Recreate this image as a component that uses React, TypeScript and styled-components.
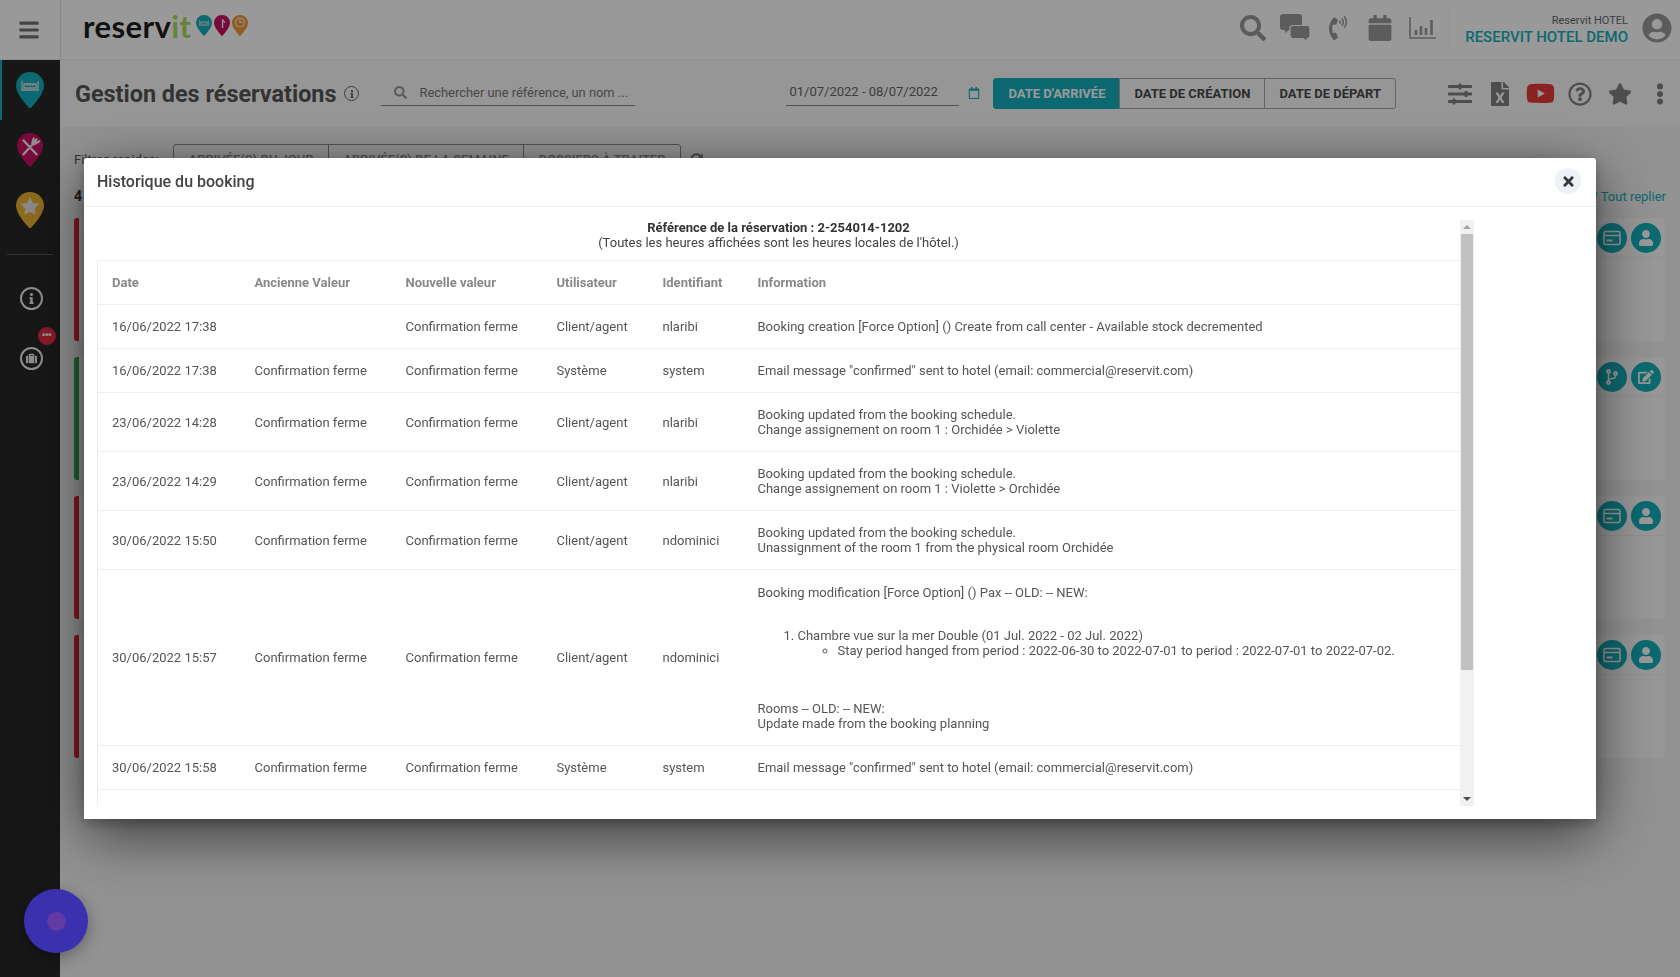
import { ReactNode } from 'react';
import styled, { createGlobalStyle } from 'styled-components';
import {
  FaBars, FaSearch, FaPhoneVolume, FaCalendar, FaUserCircle, FaSlidersH, FaFileExcel, FaYoutube,
  FaRegQuestionCircle, FaStar, FaEllipsisV, FaTimes, FaInfo, FaSuitcase, FaRegCalendar, FaUser,
  FaCodeBranch, FaEdit, FaSyncAlt,
} from 'react-icons/fa';

const TEAL = '#14b0bc';

const Global = createGlobalStyle`
  html, body { margin: 0; padding: 0; height: 100%; }
  body { font-family: Roboto, 'Liberation Sans', sans-serif; background: #f4f4f4; overflow: hidden; }
  * { box-sizing: border-box; }
`;

const Page = styled.div`
  width: 1680px;
  height: 977px;
  display: flex;
  flex-direction: column;
  overflow: hidden;
`;

const TopBar = styled.header`
  height: 60px;
  flex-shrink: 0;
  display: flex;
  align-items: center;
  background: #fff;
  border-bottom: 1px solid #f0f0f0;
`;

const BurgerCell = styled.div`
  width: 61px;
  height: 59px;
  display: flex;
  align-items: center;
  justify-content: center;
  border-right: 1px solid #e4e4e4;
  color: #707070;
  font-size: 22px;
  padding-right: 2px;
`;

const Logo = styled.div`
  margin-left: 22px;
  display: flex;
  align-items: center;
  gap: 2px;
  height: 52px;
  margin-top: -8px;
`;

const LogoWord = styled.span`
  font-family: Lato, 'Open Sans', sans-serif;
  font-size: 31px;
  font-weight: 700;
  color: #1d1d1d;
  letter-spacing: 0.4px;
  margin-right: 3px;
  b { color: #a8dc5c; font-weight: 700; }
`;

const TopIcons = styled.div`
  margin-left: auto;
  display: flex;
  align-items: center;
`;

const TopIcon = styled.span<{ $size: number }>`
  width: 42.5px;
  display: flex;
  justify-content: center;
  padding-bottom: 4px;
  color: #999;
  font-size: ${p => p.$size}px;
`;

const HotelBlock = styled.div`
  margin-left: 5px;
  border-left: 1px solid #f0f0f0;
  height: 42px;
  display: flex;
  flex-direction: column;
  align-items: flex-end;
  justify-content: center;
  width: 179px;
`;

const HotelSmall = styled.span`
  font-size: 11px;
  line-height: 14px;
  color: #666;
`;

const HotelName = styled.span`
  font-size: 15px;
  line-height: 18px;
  font-weight: 500;
  color: ${TEAL};
  white-space: nowrap;
`;

const Avatar = styled.span`
  margin: 0 8px 0 14px;
  color: #999;
  font-size: 30px;
  display: flex;
  padding-bottom: 4px;
`;

const Body = styled.div`
  flex: 1;
  display: flex;
  min-height: 0;
`;

const Sidebar = styled.nav`
  width: 60px;
  flex-shrink: 0;
  background: #272727;
  display: flex;
  flex-direction: column;
  align-items: center;
`;

const ModuleLink = styled.div<{ $active?: boolean }>`
  width: 100%;
  height: 60px;
  display: flex;
  align-items: center;
  justify-content: center;
  border-left: 2px solid ${p => (p.$active ? TEAL : 'transparent')};
  padding-right: 2px;
`;

const SideRule = styled.div`
  width: 46px;
  height: 1px;
  background: #555;
  margin-top: 14px;
`;

const SideTool = styled.div`
  position: relative;
  width: 23px;
  height: 23px;
  border-radius: 50%;
  border: 2px solid #eee;
  display: flex;
  align-items: center;
  justify-content: center;
  color: #eee;
  font-size: 11px;
  margin: 32px 0 0 2px;
  & + & { margin-top: 37px; }
`;

const RedBadge = styled.span`
  position: absolute;
  top: -22px;
  left: 16px;
  width: 18px;
  height: 18px;
  border-radius: 50%;
  background: #e62e43;
  display: flex;
  align-items: center;
  justify-content: center;
  color: #fff;
  font-size: 10px;
  font-weight: 900;
  line-height: 8px;
  letter-spacing: -0.5px;
`;

const Main = styled.main`
  flex: 1;
  min-width: 0;
  display: flex;
  flex-direction: column;
`;

const ToolBar = styled.div`
  height: 67px;
  flex-shrink: 0;
  background: #fbfbfb;
  display: flex;
  align-items: center;
  padding-left: 15px;
`;

const PageTitle = styled.h1`
  margin: 0;
  font-size: 23.4px;
  font-weight: 700;
  color: #555;
  white-space: nowrap;
`;

const TitleInfo = styled.span`
  width: 15px;
  height: 15px;
  margin-left: 8px;
  border-radius: 50%;
  border: 1.5px solid #666;
  color: #666;
  display: flex;
  align-items: center;
  justify-content: center;
  font-size: 8px;
`;

const SearchBox = styled.div`
  margin-left: 22px;
  width: 254px;
  height: 28px;
  margin-top: -4px;
  border-bottom: 1px solid #8a8a8a;
  display: flex;
  align-items: center;
  gap: 12px;
  padding: 3px 0 0 13px;
  font-size: 12.9px;
  color: #777;
  svg { color: #999; font-size: 13px; flex-shrink: 0; }
`;

const DateBox = styled.div`
  margin-left: 151px;
  width: 173px;
  height: 28px;
  margin-top: -4px;
  border-bottom: 1px solid #8a8a8a;
  padding: 6px 0 0 3px;
  font-size: 13px;
  color: #666;
`;

const DateIcon = styled.span`
  margin: -2px 13px 0 9px;
  font-size: 12px;
  color: ${TEAL};
  display: flex;
`;

const Segments = styled.div`
  display: flex;
  height: 31px;
  margin-top: -1px;
`;

const Segment = styled.div<{ $active?: boolean }>`
  display: flex;
  align-items: center;
  justify-content: center;
  font-size: 13px;
  font-weight: 700;
  text-transform: uppercase;
  white-space: nowrap;
  padding: 0 14px;
  color: ${p => (p.$active ? '#fff' : '#4a4a4a')};
  background: ${p => (p.$active ? TEAL : 'transparent')};
  border: 1px solid ${p => (p.$active ? TEAL : '#a8a8a8')};
  margin-left: -1px;
  &:first-child { border-radius: 3px 0 0 3px; margin-left: 0; }
  &:last-child { border-radius: 0 3px 3px 0; }
`;

const ToolIcons = styled.div`
  margin-left: auto;
  display: flex;
  align-items: center;
`;

const ToolIcon = styled.span<{ $size: number; $color?: string }>`
  width: 40px;
  display: flex;
  justify-content: center;
  font-size: ${p => p.$size}px;
  color: ${p => p.$color ?? '#808080'};
`;

const Content = styled.section`
  flex: 1;
  min-height: 0;
  background: #f4f4f4;
  padding: 17px 15px 0 14px;
  display: flex;
  flex-direction: column;
`;

const FilterRow = styled.div`
  display: flex;
  align-items: center;
  height: 30px;
`;

const FilterLabel = styled.span`
  width: 99px;
  font-size: 13px;
  color: #555;
`;

const FilterGroup = styled.div`
  display: flex;
  height: 30px;
  border: 1px solid #888;
  border-radius: 3px;
`;

const FilterBtn = styled.span<{ $w: number }>`
  width: ${p => p.$w}px;
  display: flex;
  align-items: center;
  justify-content: center;
  font-size: 13px;
  font-weight: 500;
  color: #888;
  white-space: nowrap;
  & + & { border-left: 1px solid #888; }
`;

const RefreshIcon = styled.span`
  margin-left: 9px;
  font-size: 13px;
  color: #777;
  display: flex;
`;

const CountRow = styled.div`
  display: flex;
  justify-content: space-between;
  align-items: center;
  height: 18px;
  margin-top: 13px;
  font-size: 13px;
`;

const CountText = styled.strong`
  color: #333;
  font-size: 14px;
`;

const CollapseLink = styled.span`
  color: ${TEAL};
  margin-right: -1px;
`;

const CardList = styled.div`
  margin-top: 13px;
  display: flex;
  flex-direction: column;
  gap: 16px;
`;

const Card = styled.article<{ $color: string }>`
  height: 123px;
  background: #fcfcfc;
  border-left: 5px solid ${p => p.$color};
  border-radius: 3px;
`;

const CardHead = styled.div`
  height: 40px;
  border-bottom: 1px solid #f2f2f2;
  display: flex;
  justify-content: flex-end;
  align-items: center;
  gap: 4px;
  padding-right: 4px;
`;

const RoundBtn = styled.span`
  width: 30px;
  height: 30px;
  border-radius: 50%;
  background: ${TEAL};
  color: #fff;
  display: flex;
  align-items: center;
  justify-content: center;
  font-size: 16px;
`;

const Overlay = styled.div`
  position: fixed;
  inset: 0;
  background: rgba(0, 0, 0, 0.4);
  padding: 158px 84px 0;
`;

const Modal = styled.div`
  width: 1512px;
  height: 661px;
  background: #fff;
  border-radius: 3px 3px 0 0;
  box-shadow: 0 16px 60px rgba(0, 0, 0, 0.6), 0 4px 12px rgba(0, 0, 0, 0.25);
  display: flex;
  flex-direction: column;
`;

const ModalHead = styled.div`
  height: 49px;
  flex-shrink: 0;
  border-bottom: 1px solid #eeeeee;
  display: flex;
  align-items: center;
  justify-content: space-between;
  padding: 0 15px 2px 13px;
`;

const ModalTitle = styled.h2`
  margin: 0;
  font-size: 16px;
  font-weight: 500;
  color: #444;
`;

const CloseBtn = styled.span`
  width: 26px;
  height: 26px;
  border-radius: 50%;
  background: #eef2f6;
  color: #33383d;
  display: flex;
  align-items: center;
  justify-content: center;
  font-size: 15px;
`;

const ModalBody = styled.div`
  display: flex;
  width: 1377px;
  margin: 13px 0 0 13px;
  height: 586px;
`;

const ScrollView = styled.div`
  flex: 1;
  min-width: 0;
  overflow: hidden;
`;

const RefBlock = styled.div`
  height: 40px;
  text-align: center;
  font-size: 13px;
  line-height: 15px;
  color: #444;
  strong { font-weight: 700; color: #333; }
`;

const HistoryTable = styled.table`
  width: 100%;
  table-layout: fixed;
  border-collapse: collapse;
  border: 1px solid #eeeeee;
  border-right: 0;
  font-size: 13px;
  color: #555;

  th, td {
    padding: 0 14px;
    text-align: left;
    border-top: 1px solid #eeeeee;
    line-height: 15px;
  }
  th { height: 44px; color: #888; font-weight: 700; font-size: 13px; }
  td { height: 44px; }
`;

const InfoList = styled.ol`
  margin: 28px 0 43px;
  padding-left: 40px;
  ul { margin: 0; padding-left: 40px; list-style: circle; }
`;

const InfoLine = styled.div`
  margin-bottom: 0;
`;

const ScrollRail = styled.div`
  width: 14px;
  flex-shrink: 0;
  height: 100%;
  background: #f1f1f1;
  display: flex;
  flex-direction: column;
  align-items: center;
`;

const RailArrow = styled.span<{ $down?: boolean }>`
  height: 14px;
  flex-shrink: 0;
  display: flex;
  align-items: center;
  justify-content: center;
  &::before {
    content: '';
    border-left: 4px solid transparent;
    border-right: 4px solid transparent;
    ${p => (p.$down ? 'border-top: 4px solid #505050;' : 'border-bottom: 4px solid #a3a3a3;')}
  }
`;

const RailTrack = styled.div`
  flex: 1;
  width: 100%;
  padding: 0 1px;
`;

const RailThumb = styled.div`
  height: 436px;
  background: #c1c1c1;
`;

const ChatFab = styled.div`
  position: fixed;
  left: 24px;
  bottom: 24px;
  width: 64px;
  height: 64px;
  border-radius: 50%;
  background: #3b30b0;
  box-shadow: 0 4px 16px rgba(0, 0, 0, 0.35);
  display: flex;
  align-items: center;
  justify-content: center;
  &::after {
    content: '';
    width: 19px;
    height: 19px;
    border-radius: 50%;
    background: #613aa2;
  }
`;

function Pin({ size, color, children }: { size: number; color: string; children?: ReactNode }) {
  return (
    <svg width={size} height={size * 1.32} viewBox="0 0 28 37">
      <path d="M14 0C6.3 0 0 6 0 13.6c0 8 8.6 17.6 14 23.4 5.400-5.800 14-15.400 14-23.400C28 6 21.700 0 14 0z" fill={color} />
      {children}
    </svg>
  );
}

const BedGlyph = () => (
  <path d="M6 9v10M22 9v10M8 12h12v4H8zM6 18h16M11 12v2M14 12v2M17 12v2" stroke="#e4e4e4" strokeWidth="1.300" fill="none" />
);

const CutleryGlyph = () => (
  <path d="M7 8l14 15M20 9L7 23M18 6l-1.500 5M21 7l-3 4M24 9l-5 3" stroke="#f2f2f2" strokeWidth="2.400" fill="none" strokeLinecap="round" />
);

const StarGlyph = () => (
  <path d="M14 5l2.900 5.900 6.500.900-4.700 4.600 1.100 6.500-5.800-3-5.800 3 1.100-6.500-4.700-4.600 6.500-.900z" fill="#e6e6e6" />
);

const ClockGlyph = () => (
  <path d="M14 5a8 8 0 1 0 .01 0M14 8v5h5" stroke="#eee" strokeWidth="2" fill="none" />
);

const ChatIcon = () => (
  <svg width="30" height="27" viewBox="0 0 30 27" fill="#999">
    <path d="M3 0h16a3 3 0 0 1 3 3v10a3 3 0 0 1-3 3H9l-4 3v-3H3a3 3 0 0 1-3-3V3a3 3 0 0 1 3-3z" />
    <path d="M13 11.500h14a3 3 0 0 1 3 3v7a3 3 0 0 1-3 3v3l-4-3H13a3 3 0 0 1-3-3v-7a3 3 0 0 1 3-3z" stroke="#fff" strokeWidth="1.200" />
  </svg>
);

const BarsIcon = () => (
  <svg width="27" height="22" viewBox="0 0 27 22" fill="none" stroke="#999">
    <path d="M1 0v21h26" strokeWidth="1.600" />
    <path d="M7 18v-5M12 18V9M17 18v-7M22.500 18V3" strokeWidth="2.600" />
  </svg>
);

const CardGlyph = () => (
  <svg width="18" height="16" viewBox="0 0 18 16" fill="none" stroke="#fff">
    <rect x="1" y="1.500" width="16" height="13" rx="1.500" strokeWidth="1.500" />
    <path d="M1 5.500h16" strokeWidth="1.500" />
    <rect x="3.500" y="9.500" width="6" height="2" fill="#fff" strokeWidth="0" />
  </svg>
);

const rows = [
  ['16/06/2022 17:38', '', 'Confirmation ferme', 'Client/agent', 'nlaribi', ['Booking creation [Force Option] () Create from call center - Available stock decremented']],
  ['16/06/2022 17:38', 'Confirmation ferme', 'Confirmation ferme', 'Système', 'system', ['Email message "confirmed" sent to hotel (email: commercial@reservit.com)']],
  ['23/06/2022 14:28', 'Confirmation ferme', 'Confirmation ferme', 'Client/agent', 'nlaribi', ['Booking updated from the booking schedule.', 'Change assignement on room 1 : Orchidée > Violette']],
  ['23/06/2022 14:29', 'Confirmation ferme', 'Confirmation ferme', 'Client/agent', 'nlaribi', ['Booking updated from the booking schedule.', 'Change assignement on room 1 : Violette > Orchidée']],
  ['30/06/2022 15:50', 'Confirmation ferme', 'Confirmation ferme', 'Client/agent', 'ndominici', ['Booking updated from the booking schedule.', 'Unassignment of the room 1 from the physical room Orchidée']],
] as const;

const cardColors = ['#e0263c', '#2fa84f', '#e0263c', '#e0263c'];

export default function App() {
  return (
    <Page>
      <Global />
      <TopBar>
        <BurgerCell><FaBars /></BurgerCell>
        <Logo>
          <LogoWord>reserv<b>it</b></LogoWord>
          <Pin size={16} color={TEAL}><BedGlyph /></Pin>
          <Pin size={16} color="#c80f62"><path d="M15 7v16M15 9l4 4" stroke="#eee" strokeWidth="2.500" fill="none" /></Pin>
          <Pin size={16} color="#f09a35"><ClockGlyph /></Pin>
        </Logo>
        <TopIcons>
          <TopIcon $size={26}><FaSearch /></TopIcon>
          <TopIcon $size={30}><ChatIcon /></TopIcon>
          <TopIcon $size={24}><FaPhoneVolume /></TopIcon>
          <TopIcon $size={26}><FaCalendar /></TopIcon>
          <TopIcon $size={24}><BarsIcon /></TopIcon>
          <HotelBlock>
            <HotelSmall>Reservit HOTEL</HotelSmall>
            <HotelName>RESERVIT HOTEL DEMO</HotelName>
          </HotelBlock>
          <Avatar><FaUserCircle /></Avatar>
        </TopIcons>
      </TopBar>
      <Body>
        <Sidebar>
          <ModuleLink $active><Pin size={28} color={TEAL}><BedGlyph /></Pin></ModuleLink>
          <ModuleLink><Pin size={26} color="#c80f62"><CutleryGlyph /></Pin></ModuleLink>
          <ModuleLink><Pin size={28} color="#ecb030"><StarGlyph /></Pin></ModuleLink>
          <SideRule />
          <SideTool><FaInfo /></SideTool>
          <SideTool><RedBadge>•••</RedBadge><FaSuitcase /></SideTool>
        </Sidebar>
        <Main>
          <ToolBar>
            <PageTitle>Gestion des réservations</PageTitle>
            <TitleInfo><FaInfo /></TitleInfo>
            <SearchBox><FaSearch />Rechercher une référence, un nom ...</SearchBox>
            <DateBox>01/07/2022 - 08/07/2022</DateBox>
            <DateIcon><FaRegCalendar /></DateIcon>
            <Segments>
              <Segment $active>Date d'arrivée</Segment>
              <Segment>Date de création</Segment>
              <Segment>Date de départ</Segment>
            </Segments>
            <ToolIcons>
              <ToolIcon $size={24}><FaSlidersH /></ToolIcon>
              <ToolIcon $size={24}><FaFileExcel /></ToolIcon>
              <ToolIcon $size={29} $color="#e83a3a"><FaYoutube /></ToolIcon>
              <ToolIcon $size={24}><FaRegQuestionCircle /></ToolIcon>
              <ToolIcon $size={24}><FaStar /></ToolIcon>
              <ToolIcon $size={22}><FaEllipsisV /></ToolIcon>
            </ToolIcons>
          </ToolBar>
          <Content>
            <FilterRow>
              <FilterLabel>Filtres rapides:</FilterLabel>
              <FilterGroup>
                <FilterBtn $w={154}>ARRIVÉE(S) DU JOUR</FilterBtn>
                <FilterBtn $w={195}>ARRIVÉE(S) DE LA SEMAINE</FilterBtn>
                <FilterBtn $w={157}>DOSSIERS À TRAITER</FilterBtn>
              </FilterGroup>
              <RefreshIcon><FaSyncAlt /></RefreshIcon>
            </FilterRow>
            <CountRow>
              <CountText>4</CountText>
              <CollapseLink>/ Tout replier</CollapseLink>
            </CountRow>
            <CardList>
              {cardColors.map((color, i) => (
                <Card key={i} $color={color}>
                  <CardHead>
                    <RoundBtn>{i === 1 ? <FaCodeBranch /> : <CardGlyph />}</RoundBtn>
                    <RoundBtn>{i === 1 ? <FaEdit /> : <FaUser />}</RoundBtn>
                  </CardHead>
                </Card>
              ))}
            </CardList>
          </Content>
        </Main>
      </Body>
      <Overlay>
        <Modal>
          <ModalHead>
            <ModalTitle>Historique du booking</ModalTitle>
            <CloseBtn><FaTimes /></CloseBtn>
          </ModalHead>
          <ModalBody>
            <ScrollView>
              <RefBlock>
                <strong>Référence de la réservation : 2-254014-1202</strong><br />
                (Toutes les heures affichées sont les heures locales de l'hôtel.)
              </RefBlock>
              <HistoryTable>
                <colgroup>
                  <col style={{ width: 143 }} />
                  <col style={{ width: 151 }} />
                  <col style={{ width: 151 }} />
                  <col style={{ width: 106 }} />
                  <col style={{ width: 95 }} />
                  <col />
                </colgroup>
                <thead>
                  <tr>
                    <th>Date</th>
                    <th>Ancienne Valeur</th>
                    <th>Nouvelle valeur</th>
                    <th>Utilisateur</th>
                    <th>Identifiant</th>
                    <th>Information</th>
                  </tr>
                </thead>
                <tbody>
                  {rows.map((r, i) => (
                    <tr key={i}>
                      <td>{r[0]}</td>
                      <td>{r[1]}</td>
                      <td>{r[2]}</td>
                      <td>{r[3]}</td>
                      <td>{r[4]}</td>
                      <td style={{ height: r[5].length > 1 ? 59 : 44 }}>
                        {r[5].map(line => <InfoLine key={line}>{line}</InfoLine>)}
                      </td>
                    </tr>
                  ))}
                  <tr>
                    <td>30/06/2022 15:57</td>
                    <td>Confirmation ferme</td>
                    <td>Confirmation ferme</td>
                    <td>Client/agent</td>
                    <td>ndominici</td>
                    <td style={{ height: 176 }}>
                      <InfoLine>Booking modification [Force Option] () Pax -- OLD: -- NEW:</InfoLine>
                      <InfoList>
                        <li>
                          Chambre vue sur la mer Double (01 Jul. 2022 - 02 Jul. 2022)
                          <ul><li>Stay period hanged from period : 2022-06-30 to 2022-07-01 to period : 2022-07-01 to 2022-07-02.</li></ul>
                        </li>
                      </InfoList>
                      <InfoLine>Rooms -- OLD: -- NEW:</InfoLine>
                      <InfoLine>Update made from the booking planning</InfoLine>
                    </td>
                  </tr>
                  <tr>
                    <td>30/06/2022 15:58</td>
                    <td>Confirmation ferme</td>
                    <td>Confirmation ferme</td>
                    <td>Système</td>
                    <td>system</td>
                    <td>Email message "confirmed" sent to hotel (email: commercial@reservit.com)</td>
                  </tr>
                  <tr>
                    <td>30/06/2022 16:02</td>
                    <td>Confirmation ferme</td>
                    <td>Modifié ferme</td>
                    <td>Client/agent</td>
                    <td>ndominici</td>
                    <td>Change reference of booking</td>
                  </tr>
                </tbody>
              </HistoryTable>
            </ScrollView>
            <ScrollRail>
              <RailArrow />
              <RailTrack><RailThumb /></RailTrack>
              <RailArrow $down />
            </ScrollRail>
          </ModalBody>
        </Modal>
      </Overlay>
      <ChatFab />
    </Page>
  );
}
